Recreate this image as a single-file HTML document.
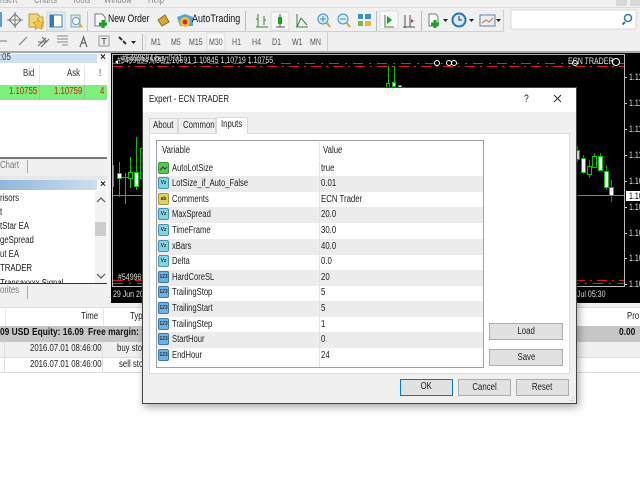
<!DOCTYPE html>
<html><head><meta charset="utf-8"><style>
html,body{margin:0;padding:0;background:#fff}
#p{position:relative;width:640px;height:480px;overflow:hidden;background:#fff;font-family:"Liberation Sans",sans-serif;font-size:10px;color:#222;filter:blur(.3px)}
#p div,#p span.a{position:absolute;white-space:nowrap}
.t{line-height:12px;transform:scaleX(.78);transform-origin:0 0}
.b{background:#e1e1e1;border:1px solid #adadad;box-sizing:border-box;text-align:center;line-height:15px;font-size:10px}
.b span{display:inline-block;transform:scaleX(.78)}
.r{left:157px;width:326px;height:16px}
.n{left:15px;line-height:15px;font-size:10px;transform:scaleX(.76);transform-origin:0 0}
.v{left:164px;line-height:15px;font-size:10px;transform:scaleX(.78);transform-origin:0 0}
.ic{left:1px;top:1px;width:11px;height:12px;box-sizing:border-box;border-radius:2px;font-size:5px;line-height:10px;text-align:center;color:#234;border:1px solid #4a90b0;font-weight:bold}
.c{color:#ddd;font-size:9px}
.m{color:#555;font-size:9px;top:36px}
</style></head><body><div id="p">

<!-- toolbars -->
<div style="left:0;top:0;width:640px;height:52px;background:#f0f0f0"></div>
<div style="left:0;top:7px;width:640px;height:1px;background:#dcdcdc"></div>
<div class="t" style="left:0;top:-5px;color:#888">nsert</div>
<div class="t" style="left:34px;top:-5px;color:#888">Charts</div>
<div class="t" style="left:72px;top:-5px;color:#888">Tools</div>
<div class="t" style="left:104px;top:-5px;color:#888">Window</div>
<div class="t" style="left:148px;top:-5px;color:#888">Help</div>
<div style="left:0;top:31px;width:503px;height:1px;background:#d0d0d0"></div>
<div style="left:503px;top:9px;width:1px;height:23px;background:#d0d0d0"></div>
<div style="left:327px;top:32px;width:1px;height:19px;background:#d0d0d0"></div>
<div style="left:0;top:51px;width:640px;height:2px;background:#a8a8a8"></div>

<svg width="640" height="52" style="position:absolute;left:0;top:0">
<rect x="0" y="12" width="2" height="15" fill="#5a9bd8"/>
<g fill="none" stroke="#777"><path d="M15 14 l6 6 -6 6 -6 -6z"/><path d="M15 12v16M7 20h16"/></g>
<path d="M29 14h9l2 3h3v10H29z" fill="#f2d675" stroke="#b99a3a"/><path d="M38 18l2 4 4 .5-3 3 1 4-4-2-3 2 1-4-3-3 4-.5z" fill="#f5c93c" stroke="#b8902a" stroke-width=".6"/>
<rect x="47" y="12" width="18" height="18" fill="#e6eef6" stroke="#c9d6e2"/><rect x="50" y="15" width="12" height="12" fill="#fff" stroke="#3c78b8"/><rect x="50" y="15" width="4" height="12" fill="#3c78b8"/>
<rect x="71" y="15" width="9" height="12" fill="#dbe8ef" stroke="#8aa"/><circle cx="76" cy="21" r="3.5" fill="#fff" stroke="#5ba0cf"/><path d="M79 24l3 3" stroke="#d9a63a" stroke-width="2"/>
<path d="M87.500 11v20" stroke="#c8c8c8"/>
<path d="M95 14h7l3 3v9H95z" fill="#fff" stroke="#777"/><path d="M103 20v8M99 24h8" stroke="#17a51c" stroke-width="3"/>
<path d="M158 20l7-5 4 7-7 4z" fill="#d7a93a" stroke="#8c6a1c"/>
<path d="M177 17l8-3 8 3v9h-13z" fill="#5ba3d5"/><circle cx="185" cy="22" r="5" fill="#f0c23c"/><circle cx="185" cy="22" r="2.500" fill="#e02a20"/>
<path d="M245.500 11v20" stroke="#bbb"/>
<path d="M258 14v13M256 27h12M264 16v9M258 19h-2M264 20h2" stroke="#3f7d3f" fill="none"/>
<rect x="271" y="12" width="18" height="18" fill="#f8f8f8" stroke="#d8d8d8"/><path d="M280 14v13M276 27h9" stroke="#555"/><rect x="278" y="17" width="4" height="7" fill="#17a51c"/>
<path d="M296 27h12M297 27l4-9 6 7M297 14v13" stroke="#3f7d3f" fill="none"/>
<circle cx="323" cy="19" r="5" fill="#d8edf8" stroke="#3d8fc5"/><path d="M320 19h6M323 16v6" stroke="#3d8fc5"/><path d="M327 23l3 4" stroke="#d9a63a" stroke-width="2"/>
<circle cx="343" cy="19" r="5" fill="#d8edf8" stroke="#3d8fc5"/><path d="M340 19h6" stroke="#3d8fc5"/><path d="M347 23l3 4" stroke="#d9a63a" stroke-width="2"/>
<rect x="358" y="14" width="5" height="5" fill="#3d8fc5"/><rect x="365" y="14" width="6" height="5" fill="#3d8fc5"/><rect x="358" y="21" width="5" height="5" fill="#7ab648"/><rect x="365" y="21" width="6" height="5" fill="#e0b93a"/>
<path d="M376.500 11v20" stroke="#bbb"/>
<rect x="380" y="11" width="18" height="18" fill="#f8f8f8" stroke="#ddd"/><path d="M385 15v12h9" stroke="#3f7d3f" fill="none"/><path d="M387 16l5 4-5 4z" fill="#17a51c"/>
<path d="M405 15v13M403 27h12M410 15v12" stroke="#555" fill="none"/><path d="M411 19l3 2-3 2z" fill="#c33"/>
<path d="M421.500 11v20" stroke="#bbb"/>
<path d="M429 14h7l2 3v9h-9z" fill="#fff" stroke="#777"/><path d="M435 20v8M431 24h8" stroke="#17a51c" stroke-width="3"/><path d="M443 19h5l-2.500 3z" fill="#222"/>
<circle cx="459" cy="20" r="6.500" fill="#d5eaf8" stroke="#1f74bd" stroke-width="2"/><path d="M459 16v4h3" stroke="#333" fill="none"/><path d="M469 19h5l-2.500 3z" fill="#222"/>
<rect x="480" y="15" width="15" height="11" fill="#e8eff5" stroke="#5c84ad"/><path d="M482 23l4-3 3 2 4-4" stroke="#c7653a" fill="none"/><path d="M496 19h5l-2.500 3z" fill="#222"/>
<path d="M0 41h7M19 45l8-8" stroke="#777" fill="none"/>
<path d="M38 46l8-8M41 47l8-8M38 42h9M42 37l5 5" stroke="#666" fill="none"/>
<path d="M57 36h11M57 39h11M57 42h11M62 45h6" stroke="#888" fill="none"/>
<path d="M80 47l3.500-10 3.500 10M81.500 43h4" stroke="#666" fill="none" stroke-width="1.200"/>
<rect x="99" y="36" width="10" height="10" fill="none" stroke="#999"/><path d="M101.500 38.500h5M104 38.500v6" stroke="#555"/>
<path d="M119 37l3 3M123 41l3 3" stroke="#333" stroke-width="2"/><path d="M131 41h5l-2.500 3z" fill="#222"/>
<path d="M142.500 34v16" stroke="#bbb"/><path d="M145.500 34v16" stroke="#ddd"/>
<rect x="207" y="33" width="18" height="17" fill="#f7f7f7" stroke="#ddd"/>
<rect x="511" y="10" width="125" height="19" fill="#fff" stroke="#d8d8d8"/>
<circle cx="628" cy="18" r="3.500" fill="none" stroke="#2e74c0" stroke-width="1.500"/><path d="M625 22l-2.500 2.500" stroke="#2e74c0" stroke-width="2"/>
<rect x="616" y="0" width="11" height="6" fill="#d8d8d8"/><rect x="630" y="0" width="10" height="6" fill="#d8d8d8"/>
</svg>
<div class="t" style="left:108px;top:13px;font-size:11px;color:#111">New Order</div>
<div class="t" style="left:192px;top:13px;font-size:11px;color:#111;transform:scaleX(.81)">AutoTrading</div>
<div class="t m" style="left:151px">M1</div>
<div class="t m" style="left:171px">M5</div>
<div class="t m" style="left:189px">M15</div>
<div class="t m" style="left:209px">M30</div>
<div class="t m" style="left:232px">H1</div>
<div class="t m" style="left:252px">H4</div>
<div class="t m" style="left:272px">D1</div>
<div class="t m" style="left:292px">W1</div>
<div class="t m" style="left:310px">MN</div>

<!-- market watch -->
<div style="left:0;top:53px;width:108px;height:252px;background:#fff"></div>
<div style="left:0;top:54px;width:97px;height:9px;background:#cfe0ef"></div>
<div class="t" style="left:0;top:52px;color:#333">:05</div>
<div class="t" style="left:100px;top:52px;font-weight:bold;color:#222;transform:none">×</div>
<div style="left:39px;top:65px;width:1px;height:19px;background:#e6e6e6"></div>
<div style="left:84px;top:65px;width:1px;height:19px;background:#e6e6e6"></div>
<div class="t" style="left:23px;top:68px;color:#333">Bid</div>
<div class="t" style="left:67px;top:68px;color:#333">Ask</div>
<div class="t" style="left:99px;top:68px;color:#333">!</div>
<div style="left:0;top:85px;width:107px;height:15px;background:#7cf07c"></div>
<div style="left:39px;top:85px;width:1px;height:15px;background:#9bc49b"></div>
<div style="left:84px;top:85px;width:1px;height:15px;background:#9bc49b"></div>
<div class="t" style="left:9px;top:86px;color:#e01414">1.10755</div>
<div class="t" style="left:54px;top:86px;color:#e01414">1.10759</div>
<div class="t" style="left:100px;top:86px;color:#e01414">4</div>
<div style="left:0;top:157px;width:107px;height:2px;background:#777"></div>
<div style="left:0;top:159px;width:108px;height:17px;background:#f0f0f0"></div>
<div class="t" style="left:0;top:160px;color:#777">Chart</div>
<div style="left:27px;top:160px;width:1px;height:13px;background:#aaa"></div>
<div style="left:0;top:176px;width:108px;height:4px;background:#e8e8e8"></div>
<div style="left:0;top:180px;width:97px;height:10px;background:linear-gradient(90deg,#8fb6de,#cfdeee)"></div>
<div class="t" style="left:100px;top:179px;font-weight:bold;color:#222;transform:none">×</div>
<div class="t" style="left:0;top:193px">risors</div>
<div class="t" style="left:0;top:207px">t</div>
<div class="t" style="left:0;top:221px">tStar EA</div>
<div class="t" style="left:0;top:235px">geSpread</div>
<div class="t" style="left:0;top:249px">ut EA</div>
<div class="t" style="left:0;top:263px">TRADER</div>
<div style="left:0;top:279px;width:95px;height:4px;overflow:hidden"><span class="a t" style="left:0;top:-1px">Transaxxxx Signal</span></div>
<div style="left:95px;top:191px;width:12px;height:92px;background:#f2f2f2"></div>
<div style="left:95px;top:222px;width:11px;height:14px;background:#cdcdcd"></div>
<svg width="12" height="92" style="position:absolute;left:95px;top:191px"><path d="M2 11l4-4 4 4M2 83l4 4 4-4" stroke="#555" fill="none" stroke-width="1.200"/></svg>
<div style="left:0;top:283px;width:107px;height:1px;background:#333"></div>
<div style="left:0;top:284px;width:108px;height:20px;background:#f0f0f0"></div>
<div class="t" style="left:0;top:285px;color:#777">orites</div>
<div style="left:27px;top:286px;width:1px;height:13px;background:#aaa"></div>

<!-- chart -->
<div style="left:108px;top:53px;width:532px;height:252px;background:#f0f0f0"></div>
<div style="left:111px;top:53px;width:529px;height:250px;background:#000"></div>
<svg width="640" height="310" style="position:absolute;left:0;top:0">
<rect x="112.500" y="54.500" width="512" height="232" fill="none" stroke="#bbb"/>
<path d="M113 63.500H624" stroke="#0a8f1c" stroke-dasharray="10 6 2 6"/>
<path d="M113 66.500H624" stroke="#e01616" stroke-dasharray="10 5 2 5"/>
<path d="M113 280.500H624" stroke="#e01616" stroke-dasharray="10 5 2 5"/>
<path d="M113 283.500H624" stroke="#0a8f1c" stroke-dasharray="10 6 2 6"/>
<path d="M113 195.500H624" stroke="#80858c"/>
<g fill="#000" stroke="#fff"><circle cx="437" cy="63" r="2.500"/><circle cx="449" cy="63" r="2.500"/><circle cx="454" cy="63" r="2.500"/><circle cx="575" cy="63" r="2.500"/><circle cx="616" cy="62" r="3.500"/></g>
<!-- left candles -->
<g stroke="#00c800" fill="none">
<path d="M113.500 165V187M119.500 162V197M125.500 173V204M122 177.500h7M130.500 157V188M136.500 137V190M142.500 126V197"/>
</g>
<rect x="117.500" y="173.500" width="4" height="5" fill="#fff" stroke="#00c800"/>
<rect x="128.500" y="172.500" width="4" height="6" fill="#000" stroke="#00c800"/>
<rect x="134.500" y="172.500" width="4" height="14" fill="#fff" stroke="#00c800"/>
<rect x="140.500" y="148.500" width="4" height="30" fill="#000" stroke="#00c800"/>
<!-- top candles -->
<path d="M388.500 66V85M394.500 66V83" stroke="#00c800"/>
<rect x="386.500" y="83.500" width="3" height="6" fill="#000" stroke="#00c800"/>
<rect x="392.500" y="82.500" width="3" height="4" fill="#fff" stroke="#00c800"/>
<rect x="398.500" y="85.500" width="3" height="4" fill="#fff" stroke="#00c800"/>
<!-- right candles -->
<g stroke="#009e00"><path d="M577.500 146V162M583.500 155V174M589.500 160V178M594.500 153V168M600.500 153V171M606.500 165V190M611.500 180V202"/></g>
<g stroke="#00c800" fill="#fff">
<rect x="576.500" y="150.500" width="3" height="9"/>
<rect x="581.500" y="158.500" width="4" height="14"/>
<rect x="587.500" y="166.500" width="4" height="8" fill="#000"/>
<rect x="592.500" y="156.500" width="4" height="11" fill="#000"/>
<rect x="598.500" y="156.500" width="4" height="14"/>
<rect x="604.500" y="171.500" width="4" height="16"/>
<rect x="609.500" y="187.500" width="4" height="8"/>
</g>
<path d="M625 77.500h2M625 103.500h2M625 129.500h2M625 155.500h2M625 181.500h2M625 207.500h2M625 233.500h2M625 258.500h2M625 284.500h2" stroke="#ccc"/>
<path d="M118 60l-3 2 3 2z" fill="#fff"/>
</svg>
<div class="t c" style="left:122px;top:52px">#5499694 buy 0.01</div>
<div class="t c" style="left:117px;top:54px">#5499694,M30 1.10691 1.10845 1.10719 1.10755</div>
<div class="t c" style="left:568px;top:55px">ECN TRADER</div>
<div class="t c" style="left:629px;top:71px">1.11</div>
<div class="t c" style="left:629px;top:97px">1.11</div>
<div class="t c" style="left:629px;top:123px">1.11</div>
<div class="t c" style="left:629px;top:149px">1.11</div>
<div class="t c" style="left:629px;top:175px">1.10</div>
<div style="left:626px;top:191px;width:14px;height:10px;background:#fff"></div>
<div class="t c" style="left:629px;top:190px;color:#000">1.10</div>
<div class="t c" style="left:629px;top:201px">1.10</div>
<div class="t c" style="left:629px;top:227px">1.10</div>
<div class="t c" style="left:629px;top:252px">1.10</div>
<div class="t c" style="left:629px;top:278px">1.10</div>
<div class="t c" style="left:118px;top:271px">#5499694</div>
<div class="t c" style="left:113px;top:288px">29 Jun 2016</div>
<div class="t c" style="left:577px;top:288px">Jul 05:30</div>

<!-- terminal -->
<div style="left:0;top:303px;width:640px;height:177px;background:#fff"></div>
<div style="left:0;top:303px;width:640px;height:4px;background:#f0f0f0"></div>
<div style="left:0;top:307px;width:640px;height:1px;background:#ddd"></div>
<div style="left:5px;top:308px;width:1px;height:18px;background:#e8e8e8"></div>
<div style="left:103px;top:308px;width:1px;height:18px;background:#e8e8e8"></div>
<div class="t" style="left:81px;top:311px">Time</div>
<div class="t" style="left:130px;top:311px">Type</div>
<div class="t" style="left:627px;top:311px">Pro</div>
<div style="left:0;top:326px;width:640px;height:16px;background:#c6c6c6"></div>
<div class="t" style="left:0;top:327px;font-weight:bold;color:#111;transform:scaleX(.84)">09 USD</div>
<div class="t" style="left:32px;top:327px;font-weight:bold;color:#111;transform:scaleX(.84)">Equity: 16.09</div>
<div class="t" style="left:88px;top:327px;font-weight:bold;color:#111;transform:scaleX(.84)">Free margin: 16.09</div>
<div class="t" style="left:619px;top:327px;font-weight:bold;color:#111;transform:scaleX(.84)">0.00</div>
<div style="left:0;top:342px;width:640px;height:15px;background:#f0f0f0"></div>
<div style="left:0;top:357px;width:640px;height:1px;background:#ddd"></div>
<div style="left:0;top:372px;width:640px;height:1px;background:#ddd"></div>
<div style="left:4px;top:342px;width:1px;height:31px;background:#ddd"></div>
<div style="left:102px;top:342px;width:1px;height:31px;background:#ddd"></div>
<div class="t" style="left:30px;top:343px">2016.07.01 08:46:00</div>
<div class="t" style="left:117px;top:343px">buy stop</div>
<div class="t" style="left:30px;top:359px">2016.07.01 08:46:00</div>
<div class="t" style="left:119px;top:359px">sell stop</div>

<!-- dialog -->
<div style="left:142px;top:87px;width:435px;height:317px;background:#f0f0f0;border:1px solid #444;box-sizing:border-box;box-shadow:2px 3px 8px rgba(0,0,0,.35)"></div>
<div style="left:143px;top:88px;width:433px;height:24px;background:#fff"></div>
<div class="t" style="left:149px;top:94px;color:#222">Expert - ECN TRADER</div>
<div class="t" style="left:524px;top:93px;font-size:11px;color:#222">?</div>
<svg width="10" height="10" style="position:absolute;left:553px;top:94px"><path d="M1 1l7 7M8 1L1 8" stroke="#333"/></svg>
<div style="left:149px;top:133px;width:421px;height:241px;background:#fff;border:1px solid #dcdcdc;box-sizing:border-box"></div>
<div style="left:149px;top:118px;width:29px;height:16px;background:#f0f0f0;border:1px solid #d9d9d9;box-sizing:border-box"></div>
<div style="left:178px;top:118px;width:38px;height:16px;background:#f0f0f0;border:1px solid #d9d9d9;box-sizing:border-box"></div>
<div style="left:216px;top:117px;width:32px;height:17px;background:#fff;border:1px solid #d9d9d9;border-bottom:0;box-sizing:border-box"></div>
<div class="t" style="left:153px;top:120px;color:#222">About</div>
<div class="t" style="left:183px;top:120px;color:#222">Common</div>
<div class="t" style="left:221px;top:119px;color:#222">Inputs</div>

<div style="left:156px;top:140px;width:328px;height:228px;border:1px solid #9aa3ad;box-sizing:border-box;background:#fff"></div>
<div style="left:319px;top:142px;width:1px;height:18px;background:#e5e5e5"></div>
<div class="t" style="left:162px;top:145px;color:#222">Variable</div>
<div class="t" style="left:323px;top:145px;color:#222">Value</div>

<div class="r" style="top:161px"><div class="ic" style="background:#5fc45a;border-color:#3a9a3a"><svg width="9" height="10" style="display:block"><path d="M1 7l3-3 2 2 2-2" stroke="#143" fill="none"/></svg></div><div class="n">AutoLotSize</div><div class="v">true</div></div>
<div class="r" style="top:176px;background:#ececec"><div class="ic" style="background:#7fd5e0">Vz</div><div class="n">LotSize_if_Auto_False</div><div class="v">0.01</div></div>
<div class="r" style="top:192px"><div class="ic" style="background:#e2d264;border-color:#a8983a">ab</div><div class="n">Comments</div><div class="v">ECN Trader</div></div>
<div class="r" style="top:207px;background:#ececec"><div class="ic" style="background:#7fd5e0">Vz</div><div class="n">MaxSpread</div><div class="v">20.0</div></div>
<div class="r" style="top:223px"><div class="ic" style="background:#7fd5e0">Vz</div><div class="n">TimeFrame</div><div class="v">30.0</div></div>
<div class="r" style="top:239px;background:#ececec"><div class="ic" style="background:#7fd5e0">Vz</div><div class="n">xBars</div><div class="v">40.0</div></div>
<div class="r" style="top:254px"><div class="ic" style="background:#7fd5e0">Vz</div><div class="n">Delta</div><div class="v">0.0</div></div>
<div class="r" style="top:270px;background:#ececec"><div class="ic" style="background:#6eb2e2;border-color:#3a78b0">123</div><div class="n">HardCoreSL</div><div class="v">20</div></div>
<div class="r" style="top:285px"><div class="ic" style="background:#6eb2e2;border-color:#3a78b0">123</div><div class="n">TrailingStop</div><div class="v">5</div></div>
<div class="r" style="top:301px;background:#ececec"><div class="ic" style="background:#6eb2e2;border-color:#3a78b0">123</div><div class="n">TrailingStart</div><div class="v">5</div></div>
<div class="r" style="top:317px"><div class="ic" style="background:#6eb2e2;border-color:#3a78b0">123</div><div class="n">TrailingStep</div><div class="v">1</div></div>
<div class="r" style="top:332px;background:#ececec"><div class="ic" style="background:#6eb2e2;border-color:#3a78b0">123</div><div class="n">StartHour</div><div class="v">0</div></div>
<div class="r" style="top:348px"><div class="ic" style="background:#6eb2e2;border-color:#3a78b0">123</div><div class="n">EndHour</div><div class="v">24</div></div>
<div style="left:319px;top:161px;width:1px;height:206px;background:#e2e2e2"></div>

<div class="b" style="left:489px;top:323px;width:74px;height:17px"><span>Load</span></div>
<div class="b" style="left:489px;top:349px;width:74px;height:17px"><span>Save</span></div>
<div class="b" style="left:400px;top:379px;width:53px;height:17px;border:1.500px solid #0078d7;line-height:14px"><span>OK</span></div>
<div class="b" style="left:458px;top:379px;width:53px;height:17px"><span>Cancel</span></div>
<div class="b" style="left:516px;top:379px;width:53px;height:17px"><span>Reset</span></div>
<svg width="8" height="8" style="position:absolute;left:568px;top:395px"><path d="M6 1v1M4 3v1M6 3v1M2 5v1M4 5v1M6 5v1" stroke="#bbb"/></svg>
</div></body></html>
